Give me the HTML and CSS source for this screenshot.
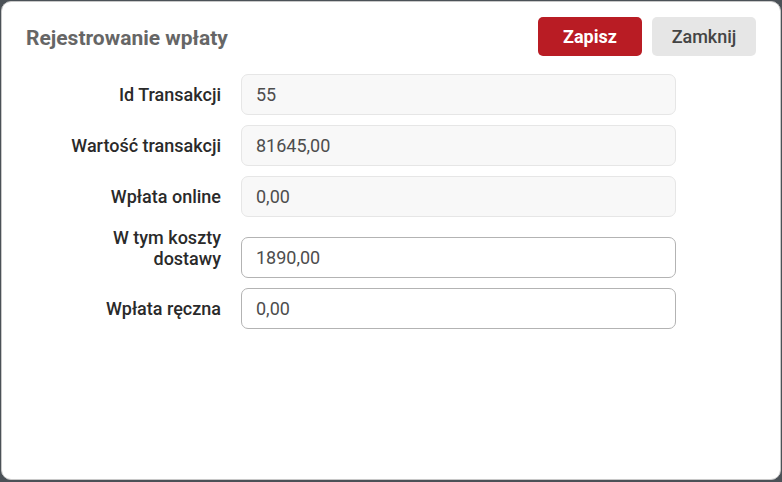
FILE: index.html
```html
<!DOCTYPE html>
<html lang="pl">
<head>
<meta charset="utf-8">
<title>Rejestrowanie wpłaty</title>
<link rel="stylesheet" href="styles.css">
</head>
<body>
<div class="dialog">
  <div class="header">
    <h1 class="title">Rejestrowanie wpłaty</h1>
    <div class="actions">
      <button class="btn btn-primary">Zapisz</button>
      <button class="btn btn-secondary">Zamknij</button>
    </div>
  </div>
  <form class="form">
    <label class="label">Id Transakcji</label>
    <input class="field readonly" value="55" readonly>
    <label class="label">Wartość transakcji</label>
    <input class="field readonly" value="81645,00" readonly>
    <label class="label">Wpłata online</label>
    <input class="field readonly" value="0,00" readonly>
    <label class="label label-multi">W tym koszty<br>dostawy</label>
    <input class="field editable end" value="1890,00">
    <label class="label">Wpłata ręczna</label>
    <input class="field editable" value="0,00">
  </form>
</div>
</body>
</html>
```
FILE: styles.css
```css
* { box-sizing: border-box; }
html, body { margin: 0; padding: 0; }
body {
  background: #4b5157;
  font-family: Roboto, "Liberation Sans", Arial, sans-serif;
  width: 782px;
  height: 482px;
  overflow: hidden;
}
.dialog {
  margin: 1px;
  width: 780px;
  height: 479px;
  background: #fff;
  border: 1px solid #c8c8c8;
  border-radius: 10px;
  padding: 15px 24px 0 24px;
}
.header {
  display: flex;
  align-items: center;
  justify-content: space-between;
}
.title {
  margin: 2px 0 0 0;
  font-size: 21px;
  font-weight: 700;
  color: #666;
}
.actions {
  display: flex;
  gap: 10px;
}
.btn {
  width: 104px;
  height: 39px;
  border: none;
  border-radius: 5px;
  font-family: inherit;
  font-size: 18px;
  padding: 0;
}
.btn-primary {
  background: #b91c24;
  color: #fff;
  font-weight: 700;
}
.btn-secondary {
  background: #e6e6e6;
  color: #444;
  font-weight: 500;
}
.form {
  margin-top: 18px;
  display: grid;
  grid-template-columns: 195px 435px;
  column-gap: 20px;
  row-gap: 10px;
  align-items: center;
}
.label {
  text-align: right;
  font-size: 18px;
  font-weight: 500;
  color: #2a2a2a;
  line-height: 21px;
}
.label-multi {
  align-self: end;
  padding-bottom: 9px;
}
.field {
  height: 41px;
  width: 435px;
  border-radius: 7px;
  font-family: inherit;
  font-size: 18px;
  color: #4d4d4d;
  padding: 0 14px;
  outline: none;
}
.readonly {
  background: #f8f8f8;
  border: 1px solid #e6e6e6;
}
.editable {
  background: #fff;
  border: 1px solid #b3b3b3;
}
.end { align-self: end; }
```
